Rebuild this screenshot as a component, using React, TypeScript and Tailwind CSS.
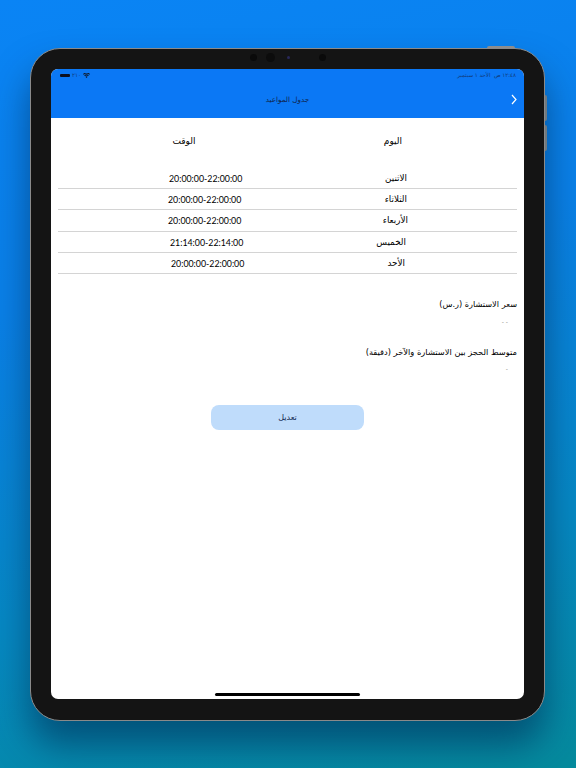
import React from 'react';

const arabic = "font-['DejaVu_Sans','Noto_Sans',sans-serif]";

const rows = [
  { day: 'الاثنين', time: '20:00:00-22:00:00', dayClass: 'pr-[110px]', timeClass: 'pl-[111px]' },
  { day: 'الثلاثاء', time: '20:00:00-22:00:00', dayClass: 'pr-[110px]', timeClass: 'pl-[110px]' },
  { day: 'الأربعاء', time: '20:00:00-22:00:00', dayClass: 'pr-[109px]', timeClass: 'pl-[110px]' },
  { day: 'الخميس', time: '21:14:00-22:14:00', dayClass: 'pr-[111px]', timeClass: 'pl-[112px]' },
  { day: 'الأحد', time: '20:00:00-22:00:00', dayClass: 'pr-[112px]', timeClass: 'pl-[113px]' },
];

const Wifi = () => (
  <svg width="7" height="5" viewBox="0 0 14 10" fill="#111827">
    <path d="M7 10 4.8 7.4a3.4 3.4 0 0 1 4.4 0L7 10Zm-3.2-3.8L2.4 4.6a7 7 0 0 1 9.2 0l-1.4 1.6a5 5 0 0 0-6.4 0ZM1.4 3.4 0 1.9a10.6 10.6 0 0 1 14 0l-1.4 1.5a8.6 8.6 0 0 0-11.2 0Z" />
  </svg>
);

export default function App() {
  return (
    <div className="h-[768px] w-[576px] overflow-hidden bg-[linear-gradient(168deg,#0a84f5_0%,#0a80e8_35%,#0688c4_70%,#058a9c_100%)] pt-[48px] pl-[30px]">
      <div className="relative h-[673px] w-[515px] rounded-[30px] border border-[#8a8a8a] bg-[#141414] px-[20px] pt-[20px] pb-[21px] shadow-[0_24px_36px_rgba(0,45,85,0.6)]">
        {/* side buttons */}
        <div className="absolute -top-[3px] right-[29px] h-[2px] w-[28px] rounded-t-sm bg-[#8d8d8d]" />
        <div className="absolute top-[46px] -right-[3px] h-[26px] w-[2px] rounded-r-sm bg-[#707a80]" />
        <div className="absolute top-[76px] -right-[3px] h-[26px] w-[2px] rounded-r-sm bg-[#707a80]" />

        {/* cameras */}
        <div className="absolute top-[4px] left-[219px] flex items-center">
          <div className="h-[7px] w-[7px] rounded-full bg-[#0a0a0a]" />
          <div className="ml-[9px] h-[9px] w-[9px] rounded-full bg-[#0c0c0c]" />
          <div className="ml-[12px] h-[3px] w-[3px] rounded-full bg-[#28285a]" />
          <div className="ml-[29px] h-[7px] w-[7px] rounded-full bg-[#0a0a0a]" />
        </div>

        <div dir="rtl" className={`relative flex h-[630px] w-[473px] flex-col overflow-hidden rounded-[7px] bg-white text-black ${arabic}`}>
          <header className="h-[49px] shrink-0 bg-[#0b78f5]">
            <div className="flex h-[12px] items-center justify-between pt-[1px] pr-[8px] pl-[9px] text-[5.5px] text-[#123a78]">
              <span dir="rtl">١٢:٤٨ ص&nbsp;&nbsp;الأحد ١ سبتمبر</span>
              <div dir="ltr" className="flex items-center gap-[2px]">
                <div className="h-[3px] w-[10px] rounded-[1px] bg-[#0c1020]" />
                <span>٢١٠</span>
                <Wifi />
              </div>
            </div>
            <div className="relative flex h-[37px] items-center justify-center pt-[2px] text-[7.2px] text-[#10264f]">
              <span>جدول المواعيد</span>
              <svg className="absolute top-[13px] right-[7px]" width="6" height="11" viewBox="0 0 6 11" fill="none" stroke="white" strokeWidth="1.2">
                <path d="M1 1l4 4.5L1 10" />
              </svg>
            </div>
          </header>

          <div className="grid h-[50px] shrink-0 grid-cols-2 px-[7px] pt-[16px] text-[9px] leading-[14px]">
            <div className="pr-[115px]">اليوم</div>
            <div className="pr-[92px]">الوقت</div>
          </div>

          <div className="mx-[7px] flex flex-col">
            {rows.map((row) => (
              <div key={row.day + row.time} className="grid h-[21.2px] grid-cols-2 items-center border-b border-[#d4d4d4] pt-[1px] text-[8.8px]">
                <div className={row.dayClass}>{row.day}</div>
                <div dir="ltr" className={`${row.timeClass} whitespace-nowrap font-['Lato',sans-serif] text-[8.8px]`}>{row.time}</div>
              </div>
            ))}
          </div>

          <div className="mt-[23px] pr-[7px] text-[8.2px] leading-[14px]">سعر الاستشارة (ر.س)</div>
          <div className="mt-[8px] pr-[16px] text-[6px] leading-[6px] text-[#888]">- -</div>
          <div className="mt-[20px] pr-[7px] text-[8.3px] leading-[14px]">متوسط الحجز بين الاستشارة والآخر (دقيقة)</div>
          <div className="mt-[7px] pr-[16px] text-[6px] leading-[6px] text-[#888]">-</div>

          <div className="mt-[33px] flex justify-center">
            <button className="h-[25px] w-[153px] rounded-[8px] bg-[#bfdcfb] pt-[2px] text-[8px] text-[#10264f]">تعديل</button>
          </div>

          <div className="absolute bottom-[3px] left-[164px] h-[3px] w-[145px] rounded-full bg-black" />
        </div>
      </div>
    </div>
  );
}
